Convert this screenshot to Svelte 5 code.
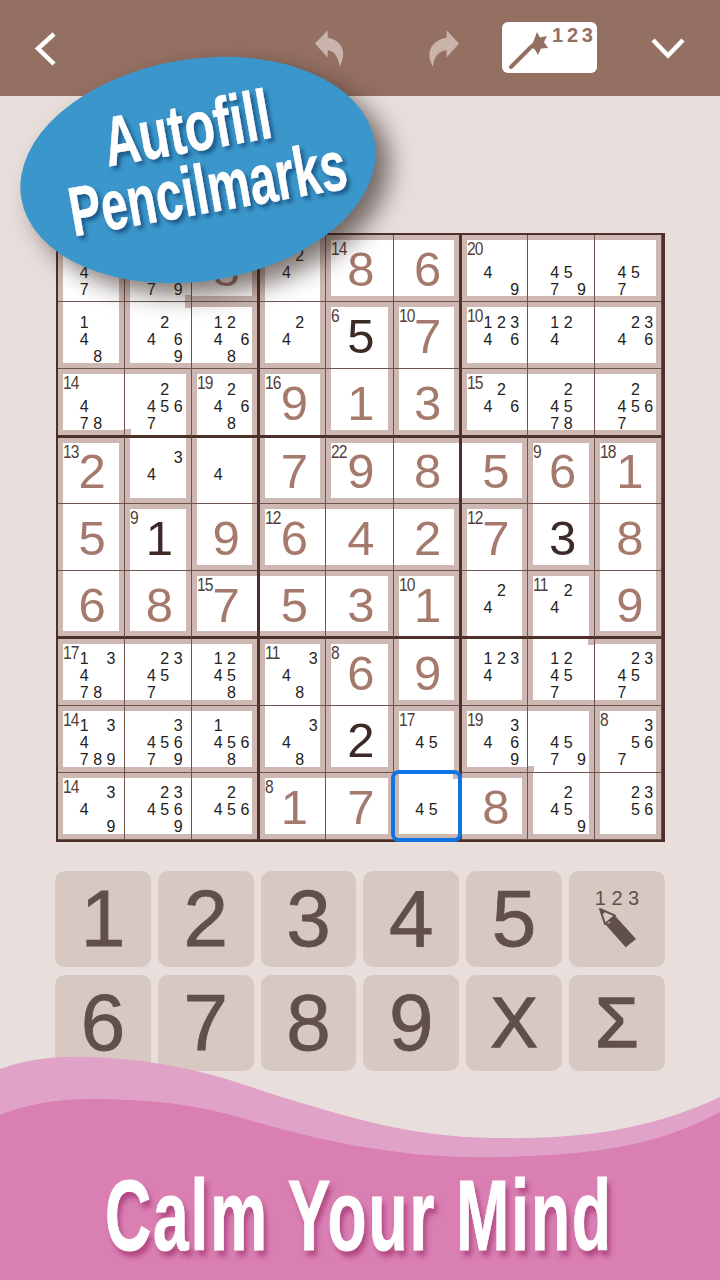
<script>
    const cages = [
        "abbcddeee",
        "abbcfghhh",
        "iijkfglll",
        "mijknnnop",
        "mqjrrrsop",
        "mqtttusvp",
        "wwwxyusvv",
        "zzzxyABBC",
        "DDDEEAABC",
    ];

    // clue:value, ".digits" = pencil marks, "!" = dark digit
    const rows = [
        [".47", ".79", "8", ".24", "14:8", "6", "20:.49", ".4579", ".457"],
        [".148", ".2469", ".12468", ".24", "6:!5", "10:7", "10:.12346", ".124", ".2346"],
        ["14:.478", ".24567", "19:.2468", "16:9", "1", "3", "15:.246", ".24578", ".24567"],
        ["13:2", ".34", ".4", "7", "22:9", "8", "5", "9:6", "18:1"],
        ["5", "9:!1", "9", "12:6", "4", "2", "12:7", "!3", "8"],
        ["6", "8", "15:7", "5", "3", "10:1", ".24", "11:.24", "9"],
        ["17:.13478", ".23457", ".12458", "11:.348", "8:6", "9", ".1234", ".12457", ".23457"],
        ["14:.134789", ".345679", ".14568", ".348", "!2", "17:.45", "19:.3469", ".4579", "8:.3567"],
        ["14:.349", ".234569", ".2456", "8:1", "7", ".45", "8", ".2459", ".2356"],
    ];

    // the U shaped cage has a wall between these two
    function same(r, c, r2, c2) {
        if (r2 < 0 || c2 < 0 || r2 > 8 || c2 > 8) return false;
        if (c === 2 && c2 === 2 && r + r2 === 1) return false;
        return cages[r][c] === cages[r2][c2];
    }

    const cells = [];
    rows.forEach((row, r) => {
        row.forEach((raw, c) => {
            const parts = raw.split(":");
            const value = parts[parts.length - 1];
            const classes = [];
            if (!same(r, c, r - 1, c)) classes.push("bt");
            if (!same(r, c, r + 1, c)) classes.push("bb");
            if (!same(r, c, r, c - 1)) classes.push("bl");
            if (!same(r, c, r, c + 1)) classes.push("br");

            const notches = [];
            for (const [dr, dc, name] of [[-1, -1, "tl"], [-1, 1, "tr"], [1, -1, "bl"], [1, 1, "br"]]) {
                if (same(r, c, r + dr, c) && same(r, c, r, c + dc)) {
                    const closed = same(r + dr, c, r + dr, c + dc) && same(r, c + dc, r + dr, c + dc);
                    if (!closed) notches.push(name);
                }
            }

            cells.push({
                key: r + "-" + c,
                clue: parts.length > 1 ? parts[0] : "",
                marks: value[0] === "." ? [1, 2, 3, 4, 5, 6, 7, 8, 9].map((d) => (value.includes(d) ? d : "")) : null,
                digit: value[0] === "." ? "" : value.replace("!", ""),
                dark: value[0] === "!",
                classes: classes.join(" "),
                notches,
                col: c,
                row: r,
                selected: r === 8 && c === 5,
            });
        });
    });

    const keys = ["1", "2", "3", "4", "5", "pencil", "6", "7", "8", "9", "X", "Σ"];
</script>

<div class="page">
    <header class="topbar">
        <svg class="back" width="24" height="36" viewBox="0 0 24 36"><path d="M20 3 L4 17.5 L20 33" /></svg>
        <svg class="undo" width="34" height="41" viewBox="45 55 115 123"><path d="M45 100 L88 55 L88 80 C125 85 160 120 128 178 C125 145 110 125 88 122 L88 147 Z" /></svg>
        <svg class="redo" width="34" height="41" viewBox="365 55 115 123"><path d="M480 100 L438 55 L438 80 C395 85 360 125 392 178 C395 145 410 125 438 122 L438 147 Z" /></svg>
        <div class="autofill">
            <svg width="44" height="46" viewBox="0 0 44 46">
                <path class="wand" d="M3 42 L22 23" />
                <path class="star" d="M29 7 L32 12.5 L39 11 L36 17 L40 23 L33 23.5 L30 30 L26.5 24 L20 22 L25 17.5 Z" />
            </svg>
            <span>123</span>
        </div>
        <svg class="down" width="34" height="22" viewBox="0 0 34 22"><path d="M2 3 L17 18.5 L32 3" /></svg>
    </header>

    <div class="bubble">
        <div class="bubble-text">
            <span class="l1">Autofill</span>
            <span class="l2">Pencilmarks</span>
        </div>
    </div>

    <div class="board">
        {#each cells as cell (cell.key)}
            <div class="cell col{cell.col} row{cell.row}">
                <div class="fill {cell.classes}">
                    {#each cell.notches as n}
                        <i class="notch n-{n}"></i>
                    {/each}
                </div>
                {#if cell.marks}
                    <div class="marks">
                        {#each cell.marks as m}
                            <span>{m}</span>
                        {/each}
                    </div>
                {:else}
                    <div class="digit" class:dark={cell.dark}>{cell.digit}</div>
                {/if}
                {#if cell.clue}
                    <div class="clue">{cell.clue}</div>
                {/if}
                {#if cell.selected}
                    <div class="selected"></div>
                {/if}
            </div>
        {/each}
    </div>

    <div class="keypad">
        {#each keys as k}
            <button class="key" class:sym={k === "X" || k === "Σ"}>
                {#if k === "pencil"}
                    <div class="pencil">
                        <span>1 2 3</span>
                        <svg width="96" height="96" viewBox="0 0 96 96">
                            <path class="p-wood" d="M31 38 L46 44.7 L36 53 Z" />
                            <path class="p-lead" d="M31 38 L36.5 40.5 L33 44 Z" />
                            <path class="p-body" d="M46 44.7 L67 68 L56.7 76.3 L36 53 L41 52 L41 48 Z" />
                        </svg>
                    </div>
                {:else}
                    {k}
                {/if}
            </button>
        {/each}
    </div>

    <footer class="footer">
        <svg class="waves" width="720" height="230" viewBox="0 1050 720 230">
            <path class="wave-light" d="M0 1069 C30 1058 60 1056 90 1057 C150 1059 200 1070 245 1085 C290 1100 330 1112 370 1122 C420 1134 460 1138 500 1138 C560 1139 640 1135 720 1097 L720 1280 L0 1280 Z" />
            <path class="wave-dark" d="M0 1115 C30 1103 60 1099 90 1099 C150 1099 200 1105 245 1119 C290 1132 330 1142 370 1148 C420 1156 460 1158 500 1157 C580 1155 650 1150 720 1112 L720 1280 L0 1280 Z" />
        </svg>
        <h1><span>Calm Your Mind</span></h1>
    </footer>
</div>

<style>
    :global(body) {
        margin: 0;
    }

    .page {
        position: relative;
        width: 720px;
        height: 1280px;
        overflow: hidden;
        background: #e8dfdd;
        font-family: "Liberation Sans", Arial, sans-serif;
    }

    .topbar {
        display: flex;
        align-items: center;
        height: 96px;
        background: #947062;
        box-sizing: border-box;
    }

    .back {
        margin-left: 34px;
        margin-top: 2px;
    }

    .back path,
    .down path {
        fill: none;
        stroke: #fff;
        stroke-width: 4.5;
    }

    .undo {
        margin-left: 257px;
    }

    .redo {
        margin-left: 76px;
    }

    .undo path,
    .redo path {
        fill: #c9b3aa;
    }

    .autofill {
        display: flex;
        margin-left: 43px;
        margin-top: -1px;
        width: 95px;
        height: 51px;
        background: #fff;
        border-radius: 6px;
        box-sizing: border-box;
        padding: 3px 0 0 6px;
        color: #947062;
        font-weight: bold;
        font-size: 20px;
        letter-spacing: 3.8px;
    }

    .autofill svg {
        flex: none;
    }

    .autofill span {
        line-height: 20px;
    }

    .wand {
        fill: none;
        stroke: #947062;
        stroke-width: 4;
        stroke-linecap: round;
    }

    .star {
        fill: #947062;
    }

    .down {
        margin-left: 54px;
    }

    .bubble {
        position: absolute;
        z-index: 3;
        left: 19px;
        top: 59px;
        width: 358px;
        height: 222px;
        border-radius: 50%;
        background: #3b97cb;
        transform: rotate(-9deg);
        box-shadow: 12px 14px 24px rgba(40, 25, 20, 0.6);
    }

    .bubble-text {
        display: flex;
        flex-direction: column;
        align-items: center;
        justify-content: center;
        box-sizing: border-box;
        height: 100%;
        padding: 0 0 22px 12px;
        transform: rotate(-1deg);
        color: #fff;
        font-weight: bold;
        font-size: 70px;
        line-height: 63px;
        white-space: nowrap;
        -webkit-text-stroke: 0.6px #fff;
        text-shadow: 4px 4px 5px rgba(10, 50, 100, 0.65);
    }

    .l1 {
        transform: translateX(-9px) scaleX(0.7);
    }

    .l2 {
        transform: scaleX(0.68);
    }

    .board {
        display: grid;
        grid-template-columns: repeat(9, minmax(0, 1fr));
        grid-template-rows: repeat(9, minmax(0, 1fr));
        width: 605px;
        height: 605px;
        margin: 139px 0 0 57.5px;
        background: #fff;
        outline: 4px solid #4d302a;
        outline-offset: -2px;
    }

    .cell {
        display: grid;
        position: relative;
        min-width: 0;
        min-height: 0;
        border-right: 1px solid #6d534c;
        border-bottom: 1px solid #6d534c;
    }

    .cell > * {
        grid-area: 1 / 1;
        position: relative;
    }

    .col2,
    .col5 {
        border-right: 2px solid #4d302a;
    }

    .col3,
    .col6 {
        border-left: 1px solid #4d302a;
    }

    .row2,
    .row5 {
        border-bottom: 2px solid #4d302a;
    }

    .row3,
    .row6 {
        border-top: 1px solid #4d302a;
    }

    .fill {
        background: #fff;
        box-sizing: border-box;
    }

    .bt {
        border-top: 5.5px solid #cdb8b3;
    }

    .bb {
        border-bottom: 5.5px solid #cdb8b3;
    }

    .bl {
        border-left: 5.5px solid #cdb8b3;
    }

    .br {
        border-right: 5.5px solid #cdb8b3;
    }

    .notch {
        position: absolute;
        width: 6px;
        height: 6px;
        background: #cdb8b3;
    }

    .n-tl {
        top: 0;
        left: 0;
    }

    .n-tr {
        top: 0;
        right: 0;
    }

    .n-bl {
        bottom: 0;
        left: 0;
    }

    .n-br {
        bottom: 0;
        right: 0;
    }

    .digit {
        place-self: center;
        margin: 3px 0 0 3px;
        font-size: 49px;
        line-height: 1;
        color: #a57a6d;
    }

    .digit.dark {
        color: #3d2a27;
    }

    .marks {
        display: grid;
        grid-template-columns: repeat(3, 13.4px);
        grid-auto-rows: 17px;
        place-self: center;
        margin: 8px 0 0 14px;
        font-size: 16px;
        line-height: 17px;
        text-align: center;
        color: #262120;
    }

    .clue {
        place-self: start;
        margin: 4px 0 0 5px;
        font-size: 19px;
        line-height: 20px;
        letter-spacing: -1px;
        color: #523d38;
        transform: scaleX(0.82);
        transform-origin: left;
    }

    .cell > .selected {
        position: absolute;
        z-index: 2;
        inset: -3px;
        border: 4px solid #1074e4;
        border-radius: 8px;
    }

    .keypad {
        display: grid;
        grid-template-columns: repeat(6, 1fr);
        gap: 8px 7px;
        width: 610px;
        margin: 31px 0 0 55px;
    }

    .key {
        height: 96px;
        padding: 0;
        border: none;
        border-radius: 10px;
        background: #d8c8c2;
        color: #61504a;
        font-family: inherit;
        font-size: 80px;
        line-height: 1;
        -webkit-text-stroke: 0.8px #61504a;
    }

    .key.sym {
        font-size: 70px;
        -webkit-text-stroke: 1.6px #61504a;
    }

    .pencil {
        display: grid;
        height: 96px;
        -webkit-text-stroke: 0;
    }

    .pencil > * {
        grid-area: 1 / 1;
    }

    .pencil span {
        margin-top: 17px;
        font-size: 20px;
        line-height: 20px;
    }

    .p-wood {
        fill: #d8c8c2;
        stroke: #61504a;
        stroke-width: 2;
        stroke-linejoin: round;
    }

    .p-lead,
    .p-body {
        fill: #61504a;
    }

    .footer {
        position: absolute;
        left: 0;
        right: 0;
        bottom: 0;
        height: 230px;
    }

    .waves {
        position: absolute;
        left: 0;
        top: 0;
    }

    .wave-light {
        fill: #e0a2c6;
    }

    .wave-dark {
        fill: #d97fb2;
    }

    h1 {
        display: flex;
        justify-content: center;
        position: relative;
        margin: 115px 0 0;
        color: #fff;
        font-weight: bold;
        font-size: 100px;
        line-height: 100px;
        letter-spacing: 3px;
        white-space: nowrap;
        -webkit-text-stroke: 1px #fff;
        text-shadow: 5px 6px 6px rgba(160, 50, 110, 0.7);
    }

    h1 span {
        flex: none;
        transform: translateX(-1px) scaleX(0.64);
    }
</style>
